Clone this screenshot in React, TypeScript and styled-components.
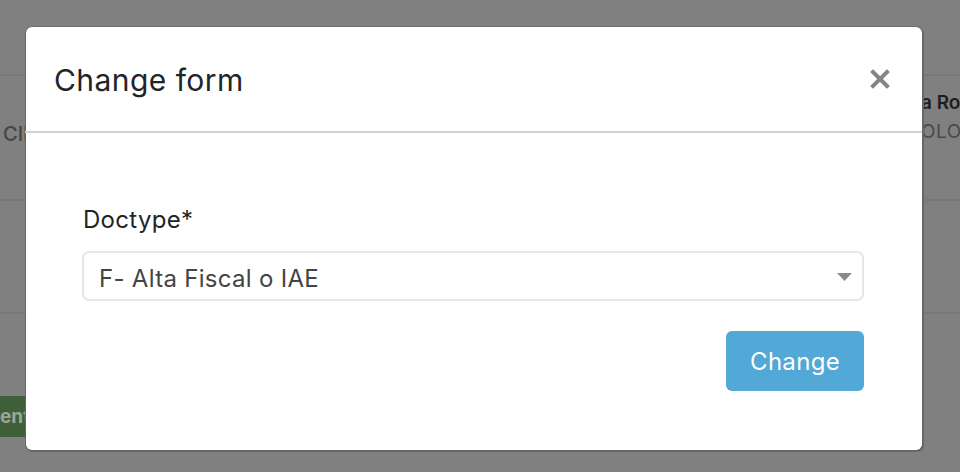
import React from "react";
import styled, { createGlobalStyle } from "styled-components";

const Global = createGlobalStyle`
  html, body { margin: 0; padding: 0; }
  body {
    width: 960px;
    height: 472px;
    overflow: hidden;
    background: #808080;
    font-family: Inter, "Noto Sans", "Liberation Sans", sans-serif;
  }
  * { box-sizing: border-box; }
`;

const Page = styled.div`
  position: relative;
  width: 960px;
  height: 472px;
  overflow: hidden;
  background: #808080;
  display: flex;
  flex-direction: column;
`;

const TopBand = styled.div`
  height: 76px;
  border-bottom: 2px solid #787878;
`;

const Row = styled.div<{ $h: number }>`
  height: ${(p) => p.$h}px;
  border-bottom: 2px solid #787878;
  display: flex;
  justify-content: space-between;
`;

const LeftCell = styled.div`
  padding: 46px 0 0 3px;
  font-size: 20px;
  color: #454545;
  font-weight: 500;
`;

const RightCell = styled.div`
  width: 39px;
  padding-top: 15px;
  overflow: hidden;
  white-space: nowrap;
  display: flex;
  flex-direction: column;
  gap: 6px;
`;

const Name = styled.span`
  font-size: 19px;
  font-weight: 600;
  color: #1e1e1e;
`;

const Sub = styled.span`
  font-size: 19px;
  color: #4a4a4a;
  letter-spacing: 0.5px;
`;

const Footer = styled.div`
  padding-top: 82px;
`;

const GreenBtn = styled.div`
  width: 26px;
  height: 41px;
  background: #3e5f38;
  color: #9ca59b;
  font-size: 19px;
  font-weight: 700;
  display: flex;
  align-items: center;
  overflow: hidden;
  white-space: nowrap;
`;

const Backdrop = styled.div`
  position: absolute;
  inset: 0;
  padding: 27px 38px 0 26px;
`;

const Modal = styled.div`
  width: 896px;
  height: 423px;
  background: #fff;
  border-radius: 6px;
  box-shadow: -1px 0 0 #666, 1px 1px 0 1px #666, 0 -1px 0 #6f6f6f;
  display: flex;
  flex-direction: column;
`;

const Header = styled.div`
  height: 106px;
  padding: 0 32px 0 28px;
  border-bottom: 2px solid #cfd2d6;
  margin-left: -1px;
  display: flex;
  align-items: center;
  justify-content: space-between;
`;

const Title = styled.h5`
  margin: 0;
  padding: 2px 0 0 1px;
  font-size: 30px;
  font-weight: 400;
  letter-spacing: 0.45px;
  color: #212529;
  line-height: 1.2;
`;

const Close = styled.button`
  border: 0;
  background: none;
  padding: 0;
  width: 20px;
  height: 22px;
  display: flex;
  align-items: center;
  justify-content: center;
  cursor: pointer;
`;

const Body = styled.div`
  padding: 69px 58px 0 56px;
  display: flex;
  flex-direction: column;
`;

const Label = styled.label`
  font-size: 24px;
  line-height: 36px;
  letter-spacing: 0.3px;
  color: #212529;
  margin-left: 1px;
`;

const SelectWrap = styled.div`
  position: relative;
  margin-top: 13px;
`;

const Select = styled.select`
  appearance: none;
  -webkit-appearance: none;
  width: 100%;
  height: 50px;
  border: 2px solid #e6e6ea;
  border-radius: 7px;
  background: #fff;
  padding: 5px 40px 0 15px;
  font-family: Inter, "Noto Sans", "Liberation Sans", sans-serif;
  font-size: 24px;
  letter-spacing: 0.3px;
  color: #444;
  outline: none;
`;

const Arrow = styled.svg`
  position: absolute;
  right: 12px;
  top: 22px;
  pointer-events: none;
`;

const Actions = styled.div`
  margin-top: 30px;
  display: flex;
  justify-content: flex-end;
`;

const Button = styled.button`
  width: 138px;
  height: 60px;
  border: 0;
  border-radius: 6px;
  background: #52a8d6;
  color: #fff;
  font-family: Inter, "Noto Sans", "Liberation Sans", sans-serif;
  font-size: 24px;
  letter-spacing: 0.3px;
  cursor: pointer;
`;

export default function App() {
  return (
    <>
      <Global />
      <Page>
        <TopBand />
        <Row $h={125}>
          <LeftCell>CIF</LeftCell>
          <RightCell>
            <Name>a Rodríguez</Name>
            <Sub>OLOGÍA</Sub>
          </RightCell>
        </Row>
        <Row $h={113} />
        <Footer>
          <GreenBtn>ente</GreenBtn>
        </Footer>
        <Backdrop>
          <Modal>
            <Header>
              <Title>Change form</Title>
              <Close aria-label="Close">
                <svg width="20" height="20" viewBox="0 0 20 20">
                  <path d="M3 3 L17 17 M17 3 L3 17" stroke="#858585" strokeWidth="4" strokeLinecap="square" />
                </svg>
              </Close>
            </Header>
            <Body>
              <Label>Doctype*</Label>
              <SelectWrap>
                <Select defaultValue="F">
                  <option value="F">F- Alta Fiscal o IAE</option>
                </Select>
                <Arrow width="15" height="8" viewBox="0 0 15 8">
                  <path d="M0 0 H15 L7.5 8 Z" fill="#8a8a8a" />
                </Arrow>
              </SelectWrap>
              <Actions>
                <Button>Change</Button>
              </Actions>
            </Body>
          </Modal>
        </Backdrop>
      </Page>
    </>
  );
}
